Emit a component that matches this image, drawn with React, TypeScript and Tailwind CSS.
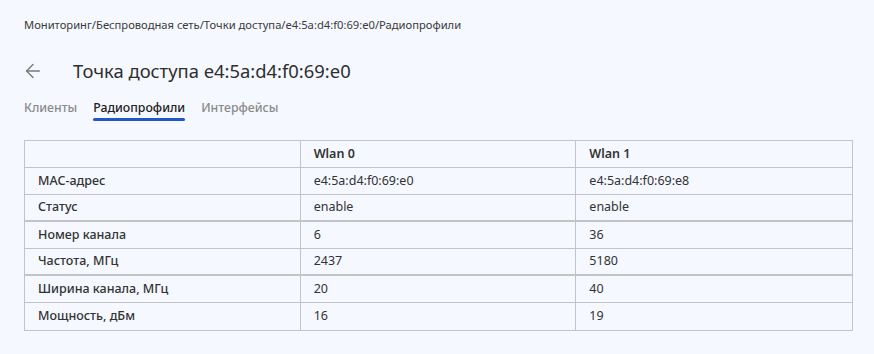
import { ArrowLeft } from "lucide-react";

const columns = ["Wlan 0", "Wlan 1"];

// строки сгруппированы: между группами линия толще
const groups: { label: string; values: string[] }[][] = [
  [
    { label: "МАС-адрес", values: ["e4:5a:d4:f0:69:e0", "e4:5a:d4:f0:69:e8"] },
    { label: "Статус", values: ["enable", "enable"] },
  ],
  [
    { label: "Номер канала", values: ["6", "36"] },
    { label: "Частота, МГц", values: ["2437", "5180"] },
  ],
  [
    { label: "Ширина канала, МГц", values: ["20", "40"] },
    { label: "Мощность, дБм", values: ["16", "19"] },
  ],
];

const tabs = ["Клиенты", "Радиопрофили", "Интерфейсы"];

export default function App() {
  return (
    <div className="min-h-[354px] w-[874px] bg-[#f5f8fe] font-['Noto_Sans',sans-serif] text-[#333333]">
      <div className="px-6 pt-[17px] text-[11.2px] leading-4 text-[#3a3a3a]">
        Мониторинг/Беспроводная сеть/Точки доступа/e4:5a:d4:f0:69:e0/Радиопрофили
      </div>

      <div className="mt-[26px] flex items-center pl-[22px] pr-6">
        <ArrowLeft className="h-[22px] w-[22px] text-[#7a7a7a]" strokeWidth={1.5} />
        <h1 className="ml-[29px] text-[18.4px] leading-6 font-normal text-[#2e2e2e]">
          Точка доступа e4:5a:d4:f0:69:e0
        </h1>
      </div>

      <div className="mt-[16px] flex gap-4 px-6">
        {tabs.map((t) => {
          const active = t === "Радиопрофили";
          return (
            <div key={t} className="flex flex-col items-stretch">
              <span
                className={`text-[12.3px] leading-[18px] font-medium ${
                  active ? "text-[#222222]" : "text-[#8a8a8a]"
                }`}
              >
                {t}
              </span>
              <span
                className={`mt-[1px] h-[3px] rounded-full ${active ? "bg-[#2357c6]" : "bg-transparent"}`}
              />
            </div>
          );
        })}
      </div>

      <div className="mt-[19px] px-6">
        <div className="w-[829px] border border-[#c4c4c4] text-[12.5px]">
          <div className="grid h-[27px] grid-cols-3 border-b border-[#c4c4c4]">
            <div className="border-r border-[#c4c4c4]" />
            {columns.map((c, i) => (
              <div
                key={c}
                className={`flex items-center px-[13px] font-semibold ${i === 0 ? "border-r border-[#c4c4c4]" : ""}`}
              >
                {c}
              </div>
            ))}
          </div>
          {groups.map((rows, gi) =>
            rows.map((row, ri) => {
              const last = ri === rows.length - 1;
              const lastGroup = gi === groups.length - 1;
              let bottom = "border-b border-[#c4c4c4]";
              if (last && lastGroup) bottom = "";
              else if (last) bottom = "border-b-2 border-[#c4c4c4]";
              return (
                <div key={row.label} className={`grid h-[27px] grid-cols-3 ${bottom}`}>
                  <div className="flex items-center border-r border-[#c4c4c4] px-[13px] font-medium">
                    {row.label}
                  </div>
                  {row.values.map((v, i) => (
                    <div
                      key={i}
                      className={`flex items-center px-[13px] ${i === 0 ? "border-r border-[#c4c4c4]" : ""}`}
                    >
                      {v}
                    </div>
                  ))}
                </div>
              );
            }),
          )}
        </div>
      </div>
    </div>
  );
}
